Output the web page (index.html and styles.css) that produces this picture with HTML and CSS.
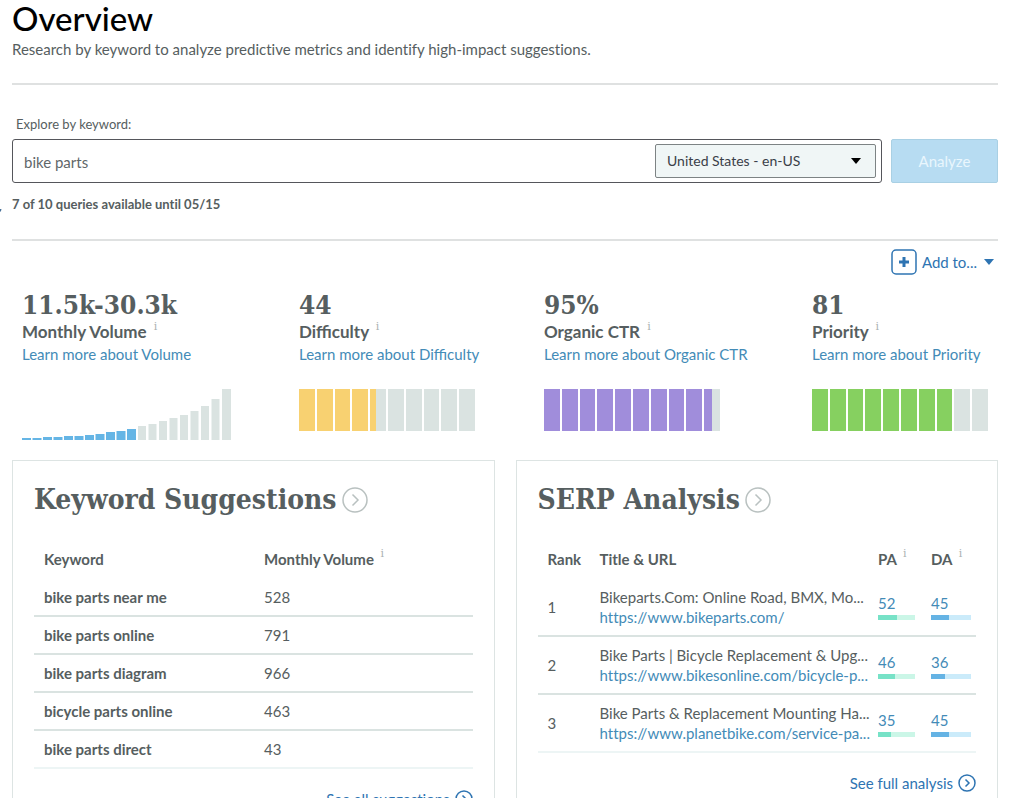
FILE: index.html
```html
<!DOCTYPE html>
<html lang="en">
<head>
<meta charset="utf-8">
<title>Overview</title>
<link rel="stylesheet" href="styles.css">
</head>
<body>
<svg class="edge-mark" width="2" height="3" viewBox="0 0 2 3" aria-hidden="true"><path d="M0 0h1.500l-.5 2-1 1z"/></svg>
<main class="page">
  <header class="page-head">
    <h1>Overview</h1>
    <p>Research by keyword to analyze predictive metrics and identify high-impact suggestions.</p>
  </header>

  <form class="search">
    <label class="search-label" for="keyword">Explore by keyword:</label>
    <div class="search-row">
      <div class="search-box">
        <input id="keyword" type="text" value="bike parts">
        <div class="locale">
          <select aria-label="Locale"><option>United States - en-US</option></select>
          <svg class="caret" width="10" height="6" viewBox="0 0 10 6" aria-hidden="true"><path d="M0 0h10L5 6z"/></svg>
        </div>
      </div>
      <button class="analyze" type="button">Analyze</button>
    </div>
    <p class="quota">7 of 10 queries available until 05/15</p>
  </form>

  <div class="actions">
    <button class="add-to" type="button">
      <svg width="26" height="26" viewBox="0 0 26 26" aria-hidden="true"><rect x="1" y="1" width="24" height="24" rx="4" fill="none" stroke="currentColor" stroke-width="1.500"/><path d="M11.500 8h3v3.500H18v3h-3.500V18h-3v-3.500H8v-3h3.500z" fill="currentColor"/></svg>
      <span>Add to...</span>
      <svg width="10" height="6" viewBox="0 0 10 6" aria-hidden="true"><path d="M0 0h10L5 6z" fill="currentColor"/></svg>
    </button>
  </div>

  <section class="metrics">
    <div class="metric">
      <strong class="value">11.5k-30.3k</strong>
      <h2>Monthly Volume <sup class="info">i</sup></h2>
      <a href="#">Learn more about Volume</a>
      <svg class="volume" width="209" height="51" viewBox="0 0 209 51" aria-hidden="true">
        <path class="blue" d="M0 49h9v2H0zM10.500 49h9v2h-9zM21 48h9v3h-9zM31.500 48h9v3h-9zM42 47h9v4h-9zM52.500 47h9v4h-9zM63 46h9v5h-9zM73.500 45h9v6h-9zM84 43h9v8h-9zM94.500 42h9v9h-9zM105 40h9v11h-9z"/>
        <path class="gray" d="M116 37h8v14h-8zM126.500 35h8v16h-8zM137 32h8v19h-8zM147.500 29h8v22h-8zM158 26h8v25h-8zM168.500 22h8v29h-8zM179 17h8v34h-8zM189.500 10h8v41h-8zM200 0h9v51h-9z"/>
      </svg>
    </div>
    <div class="metric">
      <strong class="value">44</strong>
      <h2>Difficulty <sup class="info">i</sup></h2>
      <a href="#">Learn more about Difficulty</a>
      <div class="gauge yellow"><i></i><i></i><i></i><i></i><i class="part" style="--fill:40%"></i><i class="off"></i><i class="off"></i><i class="off"></i><i class="off"></i><i class="off"></i></div>
    </div>
    <div class="metric">
      <strong class="value">95%</strong>
      <h2>Organic CTR <sup class="info">i</sup></h2>
      <a href="#">Learn more about Organic CTR</a>
      <div class="gauge purple"><i></i><i></i><i></i><i></i><i></i><i></i><i></i><i></i><i></i><i class="part" style="--fill:50%"></i></div>
    </div>
    <div class="metric">
      <strong class="value">81</strong>
      <h2>Priority <sup class="info">i</sup></h2>
      <a href="#">Learn more about Priority</a>
      <div class="gauge green"><i></i><i></i><i></i><i></i><i></i><i></i><i></i><i></i><i class="off"></i><i class="off"></i></div>
    </div>
  </section>

  <div class="cards">
    <section class="card">
      <h2 class="card-title">Keyword Suggestions <svg width="26" height="26" viewBox="0 0 26 26" aria-hidden="true"><circle cx="13" cy="13" r="12"/><path d="M10.500 7.500 16 13l-5.500 5.500"/></svg></h2>
      <table class="keywords">
        <thead><tr><th class="kw">Keyword</th><th>Monthly Volume <sup class="info">i</sup></th></tr></thead>
        <tbody>
          <tr><th scope="row">bike parts near me</th><td>528</td></tr>
          <tr><th scope="row">bike parts online</th><td>791</td></tr>
          <tr><th scope="row">bike parts diagram</th><td>966</td></tr>
          <tr><th scope="row">bicycle parts online</th><td>463</td></tr>
          <tr><th scope="row">bike parts direct</th><td>43</td></tr>
        </tbody>
      </table>
      <a class="more" href="#">See all suggestions <svg width="18" height="18" viewBox="0 0 18 18" aria-hidden="true"><circle cx="9" cy="9" r="8"/><path d="M7.500 5.500 11 9l-3.500 3.500"/></svg></a>
    </section>

    <section class="card">
      <h2 class="card-title">SERP Analysis <svg width="26" height="26" viewBox="0 0 26 26" aria-hidden="true"><circle cx="13" cy="13" r="12"/><path d="M10.500 7.500 16 13l-5.500 5.500"/></svg></h2>
      <table class="serp">
        <thead><tr><th class="rank">Rank</th><th>Title &amp; URL</th><th class="pa">PA <sup class="info">i</sup></th><th class="da">DA <sup class="info">i</sup></th></tr></thead>
        <tbody>
          <tr><td>1</td><td><span class="title">Bikeparts.Com: Online Road, BMX, Mo...</span><a href="#">https://www.bikeparts.com/</a></td>
            <td><a href="#">52</a><div class="bar mint"><i style="width:52%"></i></div></td><td><a href="#">45</a><div class="bar sky"><i style="width:45%"></i></div></td></tr>
          <tr><td>2</td><td><span class="title">Bike Parts | Bicycle Replacement &amp; Upg...</span><a href="#">https://www.bikesonline.com/bicycle-p...</a></td>
            <td><a href="#">46</a><div class="bar mint"><i style="width:46%"></i></div></td><td><a href="#">36</a><div class="bar sky"><i style="width:36%"></i></div></td></tr>
          <tr><td>3</td><td><span class="title">Bike Parts &amp; Replacement Mounting Ha...</span><a href="#">https://www.planetbike.com/service-pa...</a></td>
            <td><a href="#">35</a><div class="bar mint"><i style="width:35%"></i></div></td><td><a href="#">45</a><div class="bar sky"><i style="width:45%"></i></div></td></tr>
        </tbody>
      </table>
      <a class="more" href="#">See full analysis <svg width="18" height="18" viewBox="0 0 18 18" aria-hidden="true"><circle cx="9" cy="9" r="8"/><path d="M7.500 5.500 11 9l-3.500 3.500"/></svg></a>
    </section>
  </div>
</main>
</body>
</html>
```
FILE: styles.css
```css
* { box-sizing: border-box; }

body {
  margin: 0;
  background: #fff;
  color: #565e60;
  font: 400 15px/20px Lato, "Liberation Sans", sans-serif;
  font-variant-ligatures: none;
}

h1, h2, p { margin: 0; }
a { color: #438bb7; text-decoration: none; }
button, input, select { font: inherit; }

.edge-mark {
  position: absolute;
  left: 0;
  top: 209px;
  fill: #4a7299;
}

.page { padding: 0 26px 24px 12px; }

.page-head {
  padding-bottom: 24px;
  border-bottom: 2px solid #dfe1e1;
}

h1 {
  padding-bottom: 3px;
  color: #000;
  font-size: 33px;
  font-weight: 500;
  line-height: 36px;
}

.search {
  padding: 29px 0 25px;
  border-bottom: 2px solid #dfe1e1;
}

.search-label {
  display: block;
  padding: 0 4px 5px;
  font-size: 13px;
}

.search-row { display: flex; gap: 9px; }

.search-box {
  flex: 1;
  display: flex;
  align-items: center;
  padding: 0 5px 0 0;
  height: 44px;
  border: 1px solid #55565b;
  border-radius: 3px;
}

.search-box input {
  flex: 1;
  min-width: 0;
  padding: 2px 11px 0;
  border: 0;
  outline: 0;
  background: none;
  color: #5f6769;
}

.locale { position: relative; }

.locale select {
  appearance: none;
  width: 221px;
  height: 34px;
  padding: 0 32px 0 11px;
  border: 1px solid #7d8384;
  border-radius: 2px;
  background: #f0f6f6;
  color: #3a4048;
  font-size: 14px;
}

.caret {
  position: absolute;
  right: 15px;
  top: 14px;
  pointer-events: none;
}

.analyze {
  width: 107px;
  border: 1px solid #a9d0e4;
  border-radius: 2px;
  background: #b7dcf2;
  color: #e9f6fd;
}

.quota {
  padding-top: 11px;
  font-size: 13px;
  font-weight: 700;
}

.actions {
  display: flex;
  justify-content: flex-end;
  padding: 8px 4px 0 0;
}

.add-to {
  display: flex;
  align-items: center;
  gap: 5px;
  padding: 0;
  border: 0;
  background: none;
  color: #2e74b2;
}

.add-to span { padding-right: 2px; }

.metrics {
  display: grid;
  grid-template-columns: 277fr 245fr 268fr 176px;
  padding: 14px 10px 20px;
  font-variant-ligatures: normal;
  white-space: nowrap;
}

.value {
  display: block;
  font: 700 26px/32px "Roboto Slab", "DejaVu Serif Condensed", serif;
}

.metric h2 {
  font-size: 17px;
  font-weight: 700;
  line-height: 22px;
}

.metric a { display: block; line-height: 22px; }

.info {
  padding-left: 3px;
  color: #a9b1b1;
  font: 400 11px/8px "Roboto Slab", "DejaVu Serif", serif;
  vertical-align: 8px;
}

.volume { display: block; margin-top: 24px; }
.volume .blue { fill: #65b5e5; }
.volume .gray { fill: #dae3e1; }

.gauge {
  display: flex;
  gap: 2px;
  width: 176px;
  height: 42px;
  margin-top: 24px;
}

.gauge i { flex: 1; background: var(--on); }
.gauge .off { background: #dae3e1; }
.gauge .part { background: linear-gradient(to right, var(--on) var(--fill), #dae3e1 var(--fill)); }
.yellow { --on: #f8d171; }
.purple { --on: #a08ddb; }
.green { --on: #86d060; }

.cards {
  display: grid;
  grid-template-columns: 1fr 1fr;
  gap: 21px;
}

.card {
  padding: 21px;
  border: 1px solid #dde4e3;
}

.card-title {
  display: flex;
  align-items: center;
  gap: 5px;
  font: 700 28px/36px "Roboto Slab", "DejaVu Serif Condensed", serif;
  white-space: nowrap;
}

svg circle, .card-title path, .more path { fill: none; stroke: currentColor; stroke-width: 1.500; }
.card-title svg { color: #b9c1c0; }

table {
  width: 100%;
  margin-top: 22px;
  border-collapse: collapse;
  table-layout: fixed;
}

th, td { padding: 0; text-align: left; white-space: nowrap; }
th { font-weight: 700; }
td:first-child, th:first-child { padding-left: 10px; }
thead th { height: 38px; }
tbody tr { border-bottom: 2px solid #dae3e1; }
tbody tr:last-child { border-bottom-color: #edf5f5; }

.keywords .kw { width: 230px; }
.keywords tbody tr { height: 38px; }

.serp .rank { width: 62px; }
.serp .pa { width: 53px; }
.serp .da { width: 45px; }
.serp tbody tr { height: 58px; }
.serp td > a, .title { display: block; }

.bar { height: 5px; margin-top: 2px; }
.bar i { display: block; height: 100%; }
.mint { width: 37px; background: #cbf6e7; }
.mint i { background: #77e2c7; }
.sky { width: 40px; background: #cbebfa; }
.sky i { background: #65b3e4; }

.more {
  display: flex;
  justify-content: flex-end;
  align-items: center;
  gap: 5px;
  margin-top: 20px;
  color: #2e74b2;
}
```
